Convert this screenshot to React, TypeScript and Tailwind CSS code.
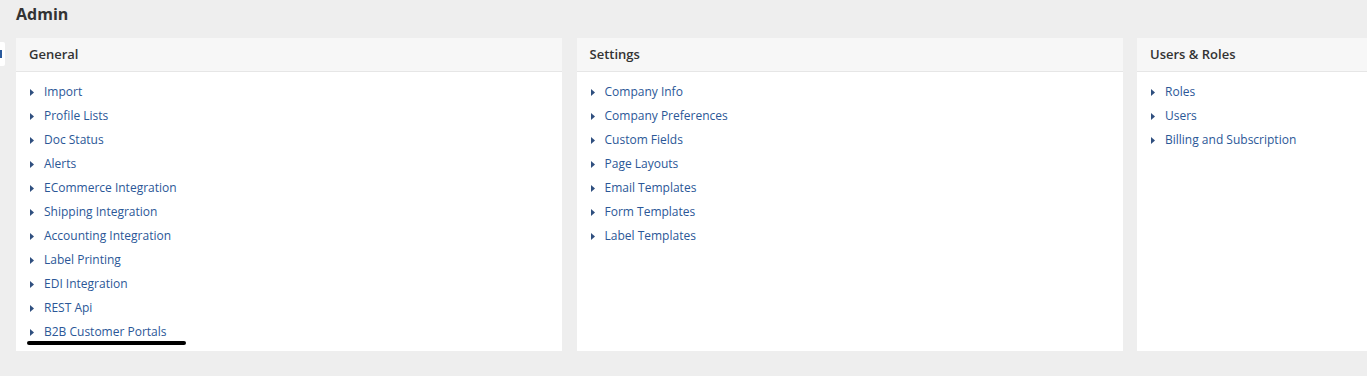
const sections = [
  {
    title: "General",
    items: [
      "Import",
      "Profile Lists",
      "Doc Status",
      "Alerts",
      "ECommerce Integration",
      "Shipping Integration",
      "Accounting Integration",
      "Label Printing",
      "EDI Integration",
      "REST Api",
      "B2B Customer Portals",
    ],
  },
  {
    title: "Settings",
    items: [
      "Company Info",
      "Company Preferences",
      "Custom Fields",
      "Page Layouts",
      "Email Templates",
      "Form Templates",
      "Label Templates",
    ],
  },
  {
    title: "Users & Roles",
    items: ["Roles", "Users", "Billing and Subscription"],
  },
];

function Caret() {
  return (
    <svg width="4" height="7" viewBox="0 0 4 7" className="shrink-0">
      <path d="M0 0 L4 3.5 L0 7 Z" fill="#2f4f7f" />
    </svg>
  );
}

export default function App() {
  return (
    <div
      className="relative h-[376px] w-[1367px] overflow-hidden bg-[#eeeeee] pl-4"
      style={{ fontFamily: "'Open Sans', sans-serif" }}
    >
      {/* side tab */}
      <div className="absolute left-0 top-[42px] flex h-[24px] w-[5px] items-center rounded-r-[2px] bg-white">
        <div className="h-[8px] w-[2px] bg-[#2a5a9c]" />
      </div>

      <h1 className="pt-[3px] text-[16px] font-bold leading-[22px] text-[#333333]">
        Admin
      </h1>

      <div className="mt-[13px] flex gap-[14.5px]">
        {sections.map((section) => (
          <div
            key={section.title}
            className="h-[313px] w-[546px] shrink-0 bg-white"
          >
            <div className="flex h-[34px] items-center border-b border-[#e6e6e6] bg-[#f7f7f7] px-[13px] text-[13px] font-semibold text-[#333333]">
              {section.title}
            </div>
            <ul className="pt-[8px]">
              {section.items.map((item) => (
                <li
                  key={item}
                  className="relative flex h-[24px] items-center gap-[10px] pl-[14px] text-[12px] text-[#2b5797]"
                >
                  <Caret />
                  <span>{item}</span>
                  {item === "B2B Customer Portals" && (
                    <span className="absolute left-[11px] top-[21px] h-[4px] w-[159px] rounded-full bg-black" />
                  )}
                </li>
              ))}
            </ul>
          </div>
        ))}
      </div>
    </div>
  );
}
